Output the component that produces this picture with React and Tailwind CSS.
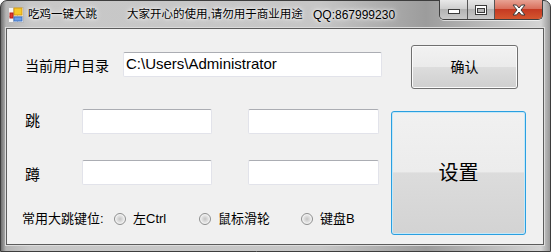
import React from "react";

/* ---------- Title bar pieces ---------- */
function AppIcon() {
  return (
    <svg width="16" height="16" viewBox="0 0 16 16">
      <rect x="0.5" y="0.5" width="15" height="15" fill="#f4f4f4" stroke="#b9b9b9" />
      <path d="M1 9.5h14M5.5 1v14M9.5 1v14" stroke="#c9c9c9" />
      <rect x="6" y="1" width="8" height="7" fill="#f6c928" stroke="#d69a12" />
      <rect x="2" y="6" width="3" height="5" fill="#e23a2e" stroke="#b71f17" />
      <rect x="6" y="10" width="8" height="4" fill="#6c9ee6" stroke="#3f72c2" />
    </svg>
  );
}

function CaptionButtons() {
  return (
    <div className="ml-auto mr-[7px] -mt-px flex h-[20px] self-start overflow-hidden rounded-b-[5px] border border-t-0 border-[#3f3f3f] shadow-[0_1px_0_rgba(255,255,255,0.6)]">
      <div className="flex w-[28px] items-center justify-center border-r border-[#555] bg-[linear-gradient(to_bottom,#e8e8e8_0%,#cfcfcf_45%,#b3b3b3_50%,#c9c9c9_100%)]">
        <svg width="12" height="6" viewBox="0 0 12 6" className="mt-[5px]">
          <rect x="0.5" y="0.5" width="11" height="4" fill="#fff" stroke="#3b3b3b" />
        </svg>
      </div>
      <div className="flex w-[27px] items-center justify-center border-r border-[#555] bg-[linear-gradient(to_bottom,#e8e8e8_0%,#cfcfcf_45%,#b3b3b3_50%,#c9c9c9_100%)]">
        <svg width="12" height="10" viewBox="0 0 12 10">
          <rect x="0.5" y="0.5" width="11" height="9" fill="#fff" stroke="#3b3b3b" />
          <rect x="2.5" y="3.5" width="7" height="4" fill="#b8b8b8" stroke="#3b3b3b" />
        </svg>
      </div>
      <div className="flex w-[47px] items-center justify-center bg-[linear-gradient(to_bottom,#e8a293_0%,#d9705d_45%,#c53a22_50%,#d5562f_100%)]">
        <svg width="14" height="12" viewBox="0 0 14 12">
          <path
            d="M1 1h3.5L7 4l2.5-3H13L9 6l4 5H9.5L7 8l-2.5 3H1l4-5z"
            fill="#fff"
            stroke="#3b3b3b"
            strokeLinejoin="round"
          />
        </svg>
      </div>
    </div>
  );
}

/* ---------- Client controls ---------- */
function TextBox({ className = "", children }) {
  return (
    <div
      className={`flex h-[25px] items-center rounded-[2px] border border-[#e2e3ea] border-t-[#abadb3] bg-white ${className}`}
    >
      {children}
    </div>
  );
}

function Radio({ label, className = "" }) {
  return (
    <div className={`flex items-center ${className}`}>
      <span className="h-[12px] w-[12px] rounded-full border border-[#8e8f8f] bg-[radial-gradient(circle,#c4c4c4_0%,#dedede_40%,#f4f4f4_75%)] shadow-[inset_0_0_0_1px_#f3f3f3]" />
      <span className="ml-[7px]">{label}</span>
    </div>
  );
}

export default function App() {
  return (
    <div className="font-['Liberation_Sans','Noto_Sans_CJK_SC',sans-serif] text-black">
      <div className="flex h-[252px] w-[551px] flex-col rounded-t-[7px] border border-[#3d3d3d] bg-[linear-gradient(to_right,#707070_0px,#b4b4b4_5px,#c8c8c8_30px,#c6c6c6_320px,#9c9c9c_425px,#b8b8b8_480px,#d4d4d4_540px,#8c8c8c_551px)]">
        {/* Title bar */}
        <div className="flex h-[28px] items-start">
          <div className="ml-[7px] mt-[6px]">
            <AppIcon />
          </div>
          <div className="ml-[4px] flex h-[27px] items-center text-[11.5px] [text-shadow:0_0_6px_#ffffff,0_0_3px_#ffffff]">
            <span className="w-[99px]">吃鸡一键大跳</span>
            <span className="w-[186px]">大家开心的使用,请勿用于商业用途</span>
            <span className="text-[12px]">QQ:867999230</span>
          </div>
          <CaptionButtons />
        </div>

        {/* Client area */}
        <div className="mb-[7px] ml-[6px] mr-[7px] flex flex-1 bg-[#f0f0f0] shadow-[0_0_0_1px_#5c5c5c,0_0_0_2px_#dcdcdc]">
          {/* Left column */}
          <div className="flex w-[384px] flex-col">
            <div className="mt-[23px] flex items-center">
              <span className="mt-[3px] w-[116px] pl-[18px] text-[14px]">当前用户目录</span>
              <TextBox className="w-[259px] pl-[2px] text-[15px]">C:\Users\Administrator</TextBox>
            </div>

            <div className="mt-[32px] flex items-center">
              <span className="w-[75px] pl-[18px] text-[15px]">跳</span>
              <TextBox className="w-[130px]" />
              <TextBox className="ml-[36px] w-[131px]" />
            </div>

            <div className="mt-[24px] flex items-center">
              <span className="mt-[6px] w-[75px] pl-[18px] text-[15px]">蹲</span>
              <TextBox className="w-[130px]" />
              <TextBox className="ml-[36px] w-[131px]" />
            </div>

            <div className="mt-[22px] flex h-[20px] items-center text-[13px]">
              <span className="w-[107px] pl-[15px]">常用大跳键位:</span>
              <Radio className="w-[85px]" label="左Ctrl" />
              <Radio className="w-[102px]" label="鼠标滑轮" />
              <Radio label="键盘B" />
            </div>
          </div>

          {/* Right column */}
          <div className="flex flex-col">
            <div className="ml-[20px] mt-[16px] flex h-[44px] w-[107px] items-center justify-center rounded-[3px] border border-[#707070] bg-[linear-gradient(to_bottom,#f2f2f2_0%,#ebebeb_49%,#dddddd_50%,#cfcfcf_100%)] text-[14px] shadow-[inset_0_0_0_1px_#fbfbfb]">
              确认
            </div>
            <div className="mt-[22px] flex h-[124px] w-[135px] items-center justify-center rounded-[3px] border border-[#2a9fe0] bg-[linear-gradient(to_bottom,#f1f1f1_0%,#ececec_49%,#dcdcdc_50%,#d3d3d3_100%)] text-[20px] shadow-[inset_0_0_0_1px_#c5e8f8]">
              设置
            </div>
          </div>
        </div>
      </div>
    </div>
  );
}
